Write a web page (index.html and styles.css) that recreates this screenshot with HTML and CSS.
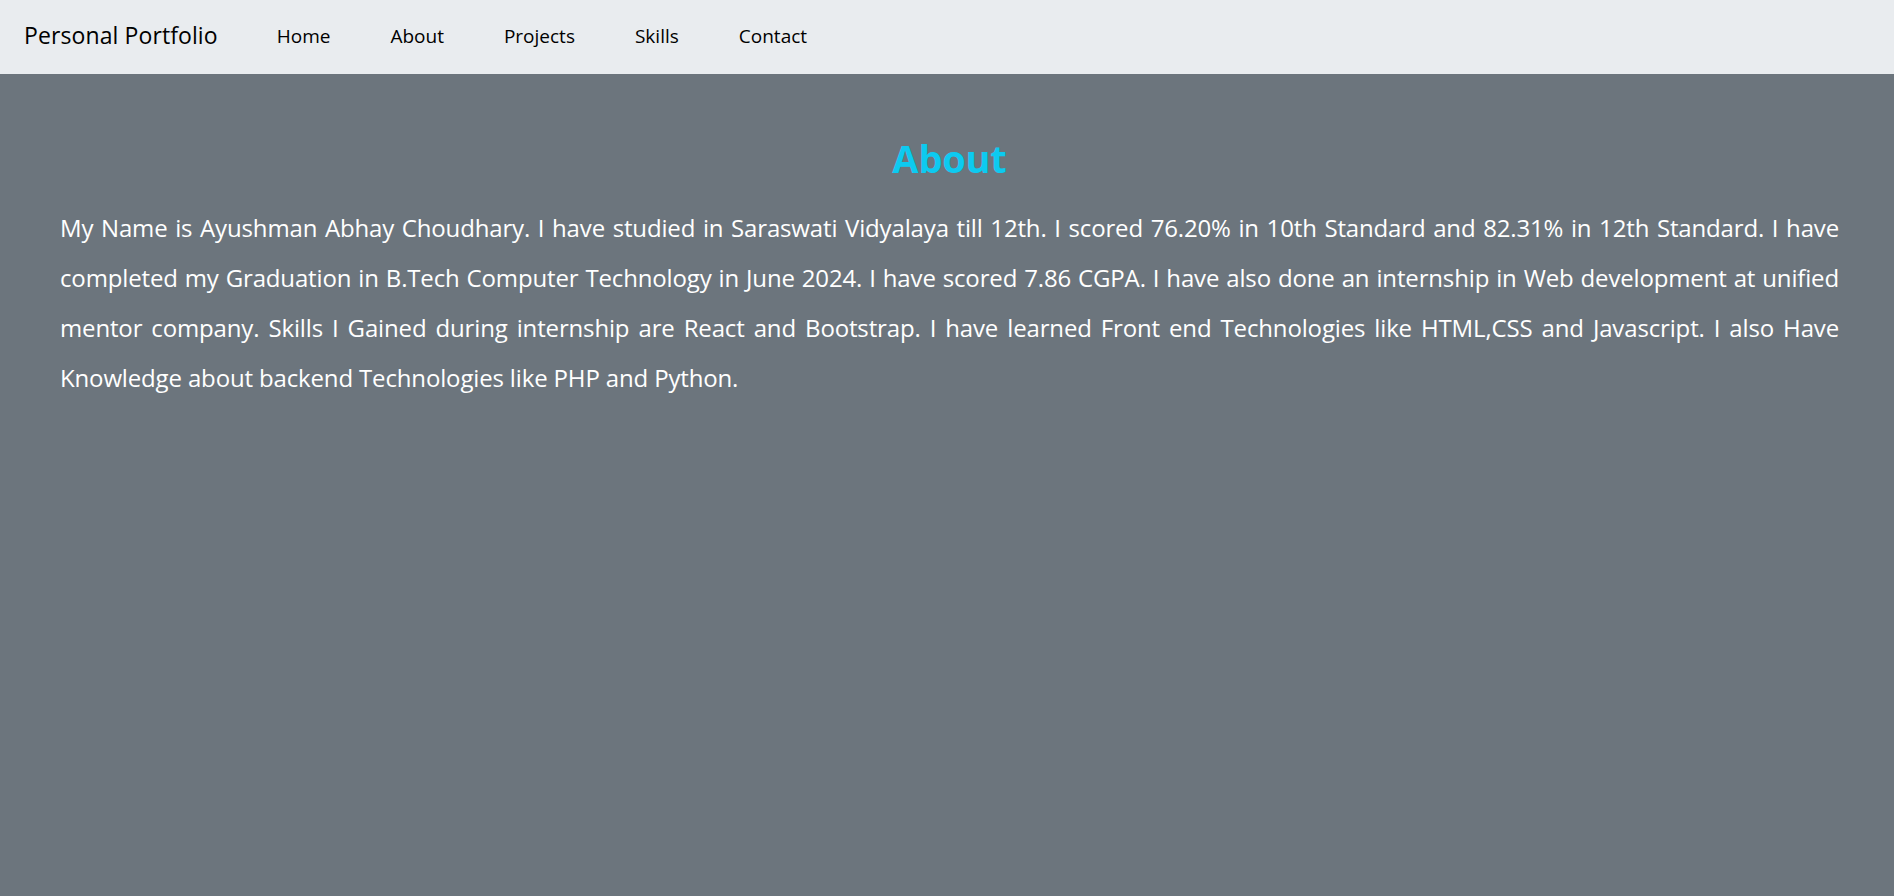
FILE: index.html
```html
<!DOCTYPE html>
<html lang="en">
<head>
<meta charset="utf-8">
<title>Personal Portfolio</title>
<link rel="stylesheet" href="styles.css">
</head>
<body>
<nav class="navbar">
  <a class="brand" href="#">Personal Portfolio</a>
  <ul class="nav-links">
    <li><a href="#">Home</a></li>
    <li><a href="#">About</a></li>
    <li><a href="#">Projects</a></li>
    <li><a href="#">Skills</a></li>
    <li><a href="#">Contact</a></li>
  </ul>
</nav>
<main class="about">
  <h1 class="about-title">About</h1>
  <p class="about-text">My Name is Ayushman Abhay Choudhary. I have studied in Saraswati Vidyalaya till 12th. I scored 76.20% in 10th Standard and 82.31% in 12th Standard. I have completed my Graduation in B.Tech Computer Technology in June 2024. I have scored 7.86 CGPA. I have also done an internship in Web development at unified mentor company. Skills I Gained during internship are React and Bootstrap. I have learned Front end Technologies like HTML,CSS and Javascript. I also Have Knowledge about backend Technologies like PHP and Python.</p>
</main>
</body>
</html>
```
FILE: styles.css
```css
*{box-sizing:border-box;}
html,body{margin:0;padding:0;height:100%;}
body{
  font-family:"Open Sans","Noto Sans",sans-serif;
  background:#6c757d;
  color:#fff;
}
.navbar{
  height:74px;
  background:#e9ecef;
  display:flex;
  align-items:center;
  padding:0 0 4px 24px;
}
.brand{
  font-size:23px;
  line-height:1.5;
  color:#000;
  text-decoration:none;
  letter-spacing:0.1px;
  margin-right:59px;
}
.nav-links{
  list-style:none;
  margin:0;
  padding:0;
  display:flex;
  gap:60px;
}
.nav-links a{
  font-size:19px;
  line-height:1.5;
  color:#000;
  text-decoration:none;
  display:block;
  padding-top:2px;
}
.about{
  padding:62px 55px 0 60px;
}
.about-title{
  margin:0;
  text-align:center;
  font-size:38px;
  line-height:1.2;
  font-weight:700;
  letter-spacing:-0.2px;
  color:#0dcaf0;
}
.about-text{
  margin:21px 0 0;
  font-size:24px;
  line-height:50px;
  letter-spacing:-0.15px;
  text-align:justify;
}
```
